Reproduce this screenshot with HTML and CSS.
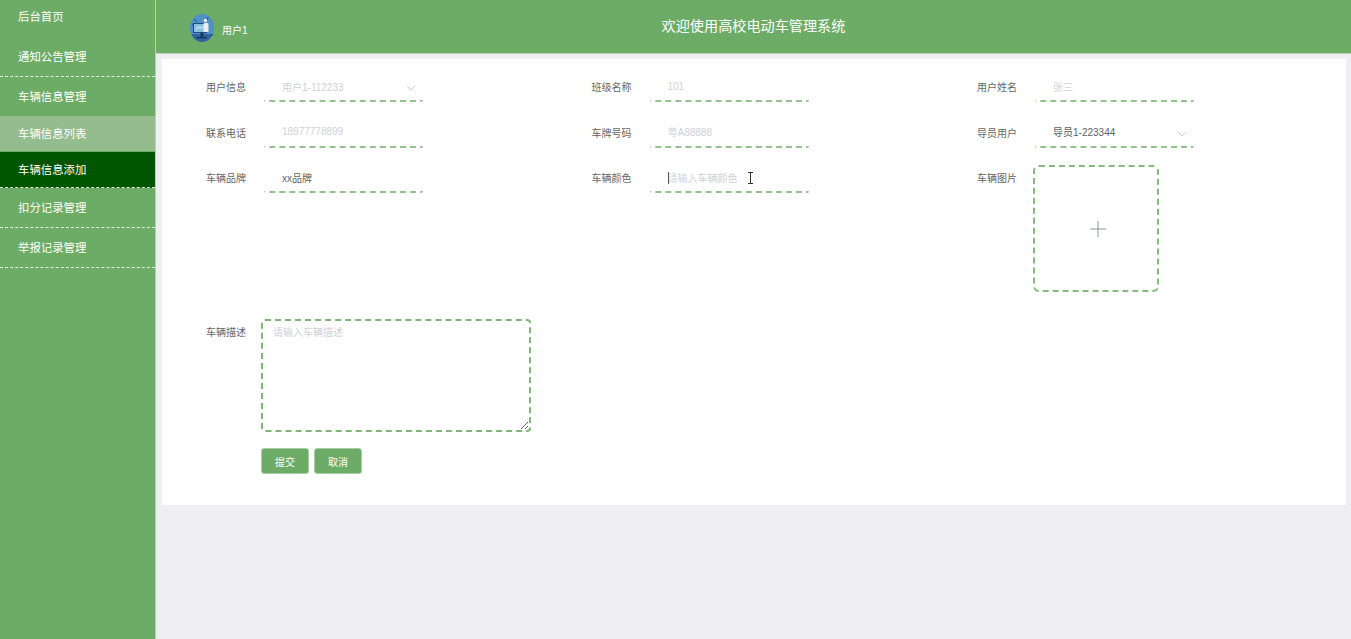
FILE: index.html
```html
<!DOCTYPE html>
<html lang="zh-CN">
<head>
  <meta charset="UTF-8" />
  <title>车辆信息添加</title>
  <link rel="stylesheet" href="styles.css">
</head>
<body>

  <!-- 左侧菜单 -->
  <aside class="sidebar">
    <a class="menu-item menu-first">后台首页</a>
    <a class="menu-item menu-line">通知公告管理</a>
    <a class="menu-item">车辆信息管理</a>
    <a class="sub-item sub-hover">车辆信息列表</a>
    <a class="sub-item sub-active">车辆信息添加</a>
    <a class="menu-item menu-line">扣分记录管理</a>
    <a class="menu-item menu-line">举报记录管理</a>
  </aside>

  <div class="content">
    <!-- 顶部 -->
    <header class="topbar">
      <div class="user">
        <svg class="avatar" viewBox="0 0 24 28">
          <ellipse cx="12" cy="14" rx="12" ry="14" fill="#4f90ca"/>
          <path d="M1.200 20h21.600a12 14 0 0 1-21.600 0z" fill="#2f659f"/>
          <path d="M4 5l3 3M18 3l-1 4M2 11h3M20 21h3M5 22l2 2M3 17h2" stroke="#1f4f86" stroke-width="1"/>
          <rect x="3.500" y="9.500" width="13" height="9" fill="#8cc0e2" stroke="#1d4a7e"/>
          <path d="M6 15l3-2 2 1 3-2" stroke="#fff" stroke-width=".7" fill="none"/>
          <circle cx="15.500" cy="6.500" r="1.800" fill="#f2f2f2"/>
          <rect x="13.500" y="9" width="5" height="9" rx="1" fill="#e8eef4"/>
          <rect x="10.500" y="19" width="3" height="4" fill="#17375f"/>
          <rect x="7" y="23" width="10" height="1.500" fill="#17375f"/>
        </svg>
        <span class="user-name">用户1</span>
      </div>
      <h1 class="title">欢迎使用高校电动车管理系统</h1>
    </header>

    <main class="main">
      <form class="card">
        <div class="form-grid">
          <div class="form-item">
            <label>用户信息</label>
            <div class="field">
              <span class="field-text muted">用户1-112233</span>
              <svg class="arrow" viewBox="0 0 10 6"><path d="M1 1l4 4 4-4" fill="none" stroke="#c0c4cc" stroke-width=".8"/></svg>
            </div>
          </div>
          <div class="form-item">
            <label>班级名称</label>
            <div class="field"><span class="field-text muted">101</span></div>
          </div>
          <div class="form-item">
            <label>用户姓名</label>
            <div class="field"><span class="field-text muted">张三</span></div>
          </div>

          <div class="form-item">
            <label>联系电话</label>
            <div class="field"><span class="field-text muted">18977778899</span></div>
          </div>
          <div class="form-item">
            <label>车牌号码</label>
            <div class="field"><span class="field-text muted">粤A88888</span></div>
          </div>
          <div class="form-item">
            <label>导员用户</label>
            <div class="field">
              <span class="field-text">导员1-223344</span>
              <svg class="arrow" viewBox="0 0 10 6"><path d="M1 1l4 4 4-4" fill="none" stroke="#c0c4cc" stroke-width=".8"/></svg>
            </div>
          </div>

          <div class="form-item">
            <label>车辆品牌</label>
            <div class="field"><span class="field-text">xx品牌</span></div>
          </div>
          <div class="form-item">
            <label>车辆颜色</label>
            <div class="field">
              <span class="caret"></span>
              <span class="field-text muted">请输入车辆颜色</span>
              <svg class="ibeam" viewBox="0 0 7 12"><path d="M1 .5h5M3.500.5v11M1 11.500h5" fill="none" stroke="#333" stroke-width="1"/></svg>
            </div>
          </div>
          <div class="form-item">
            <label>车辆图片</label>
            <div class="upload">
              <svg class="plus" viewBox="0 0 16 16"><path d="M8 0v16M0 8h16" stroke="#8c939d" stroke-width="1"/></svg>
            </div>
          </div>
        </div>

        <div class="form-item desc-item">
          <label>车辆描述</label>
          <textarea class="desc" placeholder="请输入车辆描述"></textarea>
        </div>

        <div class="actions">
          <button type="button" class="btn">提交</button>
          <button type="button" class="btn">取消</button>
        </div>
      </form>
    </main>
  </div>

</body>
</html>
```

FILE: styles.css
```css
* {
  box-sizing: border-box;
}

html, body {
  height: 100%;
}

body {
  margin: 0;
  display: flex;
  height: 639px;
  overflow: hidden;
  background-color: #eeeef3;
  font-family: "Liberation Sans", "Noto Sans CJK SC", sans-serif;
  color: #606266;
}

/* 左侧菜单 */
.sidebar {
  width: 156px;
  flex-shrink: 0;
  background-color: #6dac66;
  border-right: 1px solid #b5d3b1;
  font-size: 11.4px;
  color: #fff;
}

.menu-item {
  display: block;
  height: 40px;
  line-height: 40px;
  padding-left: 18px;
}

.menu-first {
  height: 37px;
  line-height: 34px;
}

.menu-line {
  border-bottom: 1px dashed #e4f0e2;
}

.sub-item {
  display: block;
  height: 35px;
  line-height: 36px;
  padding-left: 18px;
}

.sub-hover {
  margin-top: -1px;
  background-color: #95bc8e;
}

.sub-active {
  height: 36px;
  margin-top: 1px;
  background-color: #005500;
  border-bottom: 1px dashed #e4f0e2;
}

/* 顶部 */
.content {
  flex: 1;
  min-width: 0;
  display: flex;
  flex-direction: column;
}

.topbar {
  height: 54px;
  flex-shrink: 0;
  display: grid;
  grid-template-columns: 1fr auto 1fr;
  align-items: center;
  padding-left: 34px;
  background-color: #6dac66;
  border-bottom: 1px solid #b5d3b1;
  color: #fff;
}

.user {
  display: flex;
  align-items: center;
  gap: 8px;
  padding-top: 3px;
}

.avatar {
  width: 24px;
  height: 28px;
}

.user-name {
  font-size: 10px;
  padding-top: 3px;
}

.title {
  margin: 0 0 3px -34px;
  font-size: 14.150px;
  font-weight: normal;
}

.main {
  padding: 5px 5px 0 6px;
}

/* 表单 */
.card {
  background-color: #fff;
  height: 446px;
  padding: 13px 0 0 44px;
}

.form-grid {
  display: grid;
  grid-template-columns: 385.500px 385.500px 1fr;
  row-gap: 14.500px;
}

.form-item {
  display: flex;
  align-items: flex-start;
}

.form-item label {
  width: 58px;
  flex-shrink: 0;
  line-height: 31px;
  font-size: 10px;
  color: #666;
}

.field {
  position: relative;
  width: 159px;
  height: 30px;
  display: flex;
  align-items: center;
  padding-left: 18px;
  border-bottom: 2px dashed #93c28c;
  border-radius: 2px;
  font-size: 10px;
}

.field-text {
  color: #606266;
}

.muted {
  color: #cfd1d6;
}

.arrow {
  position: absolute;
  right: 7px;
  top: 13px;
  width: 10px;
  height: 6px;
}

.caret {
  position: absolute;
  left: 18px;
  top: 9px;
  width: 1px;
  height: 12px;
  background-color: #555;
}

.ibeam {
  position: absolute;
  left: 97px;
  top: 9px;
  width: 7px;
  height: 12px;
}

.upload {
  width: 126px;
  height: 127px;
  margin: 2px 0 0 -2px;
  display: flex;
  align-items: center;
  justify-content: center;
  border: 2px dashed #85b97e;
  border-radius: 6px;
}

.plus {
  width: 16px;
  height: 16px;
  margin-left: 3px;
}

.desc-item {
  margin-top: 27px;
}

.desc-item label {
  width: 55px;
  line-height: 27px;
}

.desc {
  display: block;
  width: 270px;
  height: 113px;
  padding: 3px 10px;
  border: 2px dashed #7fb678;
  border-radius: 4px;
  outline: none;
  font-family: inherit;
  font-size: 10px;
}

.desc::placeholder {
  color: #cfd1d6;
}

.actions {
  display: flex;
  gap: 5px;
  margin: 16px 0 0 55px;
}

.btn {
  width: 48px;
  height: 26px;
  padding: 0;
  background-color: #6dac66;
  color: #fff;
  border: 1px solid #a9cda4;
  border-radius: 3px;
  font-family: inherit;
  font-size: 10px;
}
```
